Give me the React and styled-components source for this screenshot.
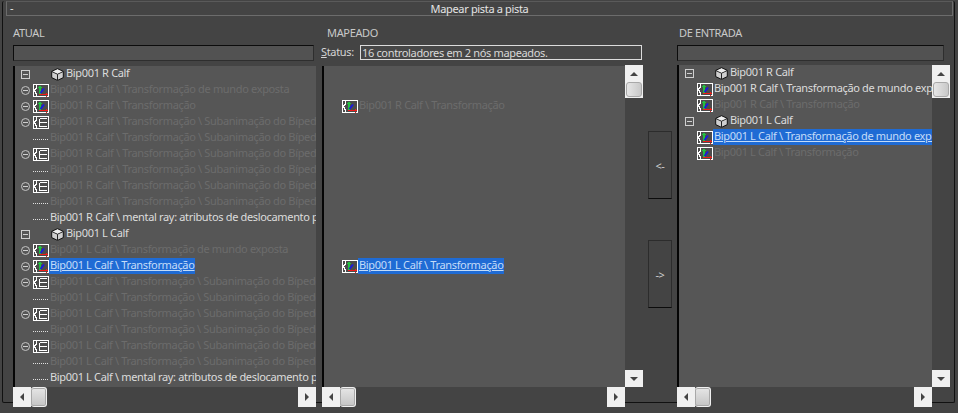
import React from 'react';
import styled, { createGlobalStyle } from 'styled-components';

const GlobalStyle = createGlobalStyle`
  html, body {
    margin: 0;
    background: #444444;
  }
`;

const r = 'Bip001 R Calf';
const l = 'Bip001 L Calf';
const SUB = ' \\ Transformação \\ Subanimação do Bípede';

const sideRows = (name, mental) => [
  { kind: 'node', text: name, bright: true },
  { kind: 'track', toggle: true, text: `${name} \\ Transformação de mundo exposta` },
  { kind: 'track', toggle: true, text: `${name} \\ Transformação`, selected: name === l },
  { kind: 'list', toggle: true, text: name + SUB + ': Rotação' },
  { kind: 'leaf', text: name + SUB + ': Posição' },
  { kind: 'list', toggle: true, text: name + SUB + ': Rotação' },
  { kind: 'leaf', text: name + SUB + ': Posição' },
  { kind: 'list', toggle: true, text: name + SUB + ': Rotação' },
  { kind: 'leaf', text: name + SUB + ': Posição' },
  { kind: 'leaf', text: mental, bright: true },
];

const currentRows = [
  ...sideRows(r, `${r} \\ mental ray: atributos de deslocamento padrão`),
  ...sideRows(l, `${l} \\ mental ray: atributos de deslocamento padrão`),
];

const mappedRows = Array.from({ length: 20 }, (_, i) => {
  if (i === 2) return { kind: 'track', text: `${r} \\ Transformação` };
  if (i === 12) return { kind: 'track', text: `${l} \\ Transformação`, selected: true };
  return { kind: 'empty' };
});

const incomingRows = [
  { kind: 'node', text: r, bright: true },
  { kind: 'track', text: `${r} \\ Transformação de mundo exposta`, bright: true },
  { kind: 'track', text: `${r} \\ Transformação` },
  { kind: 'node', text: l, bright: true },
  { kind: 'track', text: `${l} \\ Transformação de mundo exposta`, selected: true },
  { kind: 'track', text: `${l} \\ Transformação` },
];

const Brace = () => <path d="M3.5 1v3h-1v1.5h-1v2h1v1.5h1v3" fill="none" stroke="#fff" />;

const TrackIcon = () => (
  <svg width="16" height="13" viewBox="0 0 16 13" shapeRendering="crispEdges">
    <rect x="0.5" y="0.5" width="15" height="12" fill="#4c4c4c" stroke="#fff" />
    <Brace />
    <path d="M6.5 2v8" stroke="#22c040" strokeWidth="2" />
    <path d="M5 3.5h4" stroke="#22c040" />
    <path d="M7.5 9L11 4.5" stroke="#1a1ae0" strokeWidth="2" shapeRendering="auto" />
    <path d="M6 10.5h9" stroke="#f01c18" strokeWidth="1.5" />
    <path d="M13 9h1M13 12h1" stroke="#f01c18" />
  </svg>
);

const ListIcon = () => (
  <svg width="16" height="13" viewBox="0 0 16 13" shapeRendering="crispEdges">
    <rect x="0.5" y="0.5" width="15" height="12" fill="#4c4c4c" stroke="#fff" />
    <Brace />
    <path d="M6.5 2.5v8M6.5 2.5h7M6.5 6.5h7M6.5 10.5h7" stroke="#fff" fill="none" />
  </svg>
);

const CubeIcon = () => (
  <svg width="13" height="13" viewBox="0 0 13 13">
    <path d="M6.5 0.7L12.3 3.4V9.6L6.5 12.4L0.7 9.6V3.4Z" fill="#cfcfcf" stroke="#111" />
    <path d="M0.9 3.6L6.5 6.2L12.1 3.6M6.5 6.2V12" fill="none" stroke="#222" />
    <path d="M6.5 1.6L11 3.5L6.5 5.4L2 3.5Z" fill="#eeeeee" />
  </svg>
);

const Row = ({ row }) => {
  if (row.kind === 'empty') return <RowLine />;
  if (row.kind === 'node') {
    return (
      <RowLine>
        <SquareToggle />
        <CubeSlot>
          <CubeIcon />
        </CubeSlot>
        <Label $bright>{row.text}</Label>
      </RowLine>
    );
  }
  return (
    <RowLine>
      {row.toggle ? <RoundToggle /> : <ToggleGap />}
      <IconSlot>
        {row.kind === 'track' && <TrackIcon />}
        {row.kind === 'list' && <ListIcon />}
        {row.kind === 'leaf' && <Dots />}
      </IconSlot>
      <Label $bright={row.bright} $selected={row.selected}>
        {row.text}
      </Label>
    </RowLine>
  );
};

const HorizontalBar = () => (
  <HBar>
    <HButton>
      <ArrowLeft />
    </HButton>
    <HThumb />
    <HSpacer />
    <HButton>
      <ArrowRight />
    </HButton>
  </HBar>
);

const VerticalBar = () => (
  <VBar>
    <VButton>
      <ArrowUp />
    </VButton>
    <VThumbWrap>
      <VThumb />
    </VThumbWrap>
    <VSpacer />
    <VButton>
      <ArrowDown />
    </VButton>
  </VBar>
);

const TreeList = ({ rows, $flush, scroll }) => (
  <ListArea $scroll={scroll}>
    <Tree $flush={$flush}>
      {rows.map((row, i) => (
        <Row key={i} row={row} />
      ))}
    </Tree>
    {scroll && <VerticalBar />}
    <HorizontalBar />
  </ListArea>
);

const App = () => (
  <Page>
    <GlobalStyle />
    <Rollout>
      <Header>
        <Collapse>-</Collapse>
        <Title>Mapear pista a pista</Title>
      </Header>
      <Columns>
        <Column>
          <ColumnLabel>ATUAL</ColumnLabel>
          <SearchBox $width={301} />
          <TreeList rows={currentRows} />
        </Column>
        <Column>
          <ColumnLabel $inset={6}>MAPEADO</ColumnLabel>
          <StatusRow>
            <StatusCaption>
              <u>S</u>tatus:
            </StatusCaption>
            <StatusField>16 controladores em 2 nós mapeados.</StatusField>
          </StatusRow>
          <MappedWrap>
            <TreeList rows={mappedRows} scroll />
          </MappedWrap>
        </Column>
        <ButtonColumn>
          <MoveButton>&lt;-</MoveButton>
          <MoveButton>-&gt;</MoveButton>
        </ButtonColumn>
        <Column>
          <ColumnLabel $inset={2}>DE ENTRADA</ColumnLabel>
          <SearchBox $width={267} />
          <TreeList rows={incomingRows} scroll $flush />
        </Column>
      </Columns>
    </Rollout>
  </Page>
);

export default App;

const Page = styled.div`
  width: 958px;
  height: 413px;
  box-sizing: border-box;
  padding: 8px 3px 3px 2px;
  background: #444444;
  overflow: hidden;
  font-family: 'Noto Sans', 'Liberation Sans', sans-serif;
  font-size: 11px;
  letter-spacing: -0.34px;
  color: #d8d8d8;
`;

const Rollout = styled.div`
  height: 402px;
  box-sizing: border-box;
  border: 1px solid #111;
  border-top: none;
  border-radius: 2px;
`;

const Header = styled.div`
  position: relative;
  height: 15px;
  margin: -7px 1px 0 3px;
  box-sizing: border-box;
  border: 1px solid #6c6c6c;
  border-top-color: #5a5a5a;
  background: #444444;
  display: flex;
  align-items: center;
  justify-content: center;
`;

const Collapse = styled.span`
  position: absolute;
  left: 3px;
  top: -1px;
  line-height: 14px;
  color: #e8e8e8;
`;

const Title = styled.span`
  line-height: 13px;
  color: #e4e4e4;
`;

const Columns = styled.div`
  display: grid;
  grid-template-columns: 303px 322px 24px 273px;
  column-gap: 5px;
  padding: 10px 0 0 10px;
`;

const Column = styled.div`
  display: flex;
  flex-direction: column;
  min-width: 0;
`;

const ColumnLabel = styled.div`
  height: 14px;
  line-height: 14px;
  margin: 0 0 5px ${(p) => p.$inset || 0}px;
  color: #c9c9c9;
`;

const SearchBox = styled.div`
  width: ${(p) => p.$width}px;
  height: 16px;
  box-sizing: border-box;
  margin-bottom: 4px;
  background: #525252;
  border: 1px solid #2e2e2e;
  border-top: 1px solid #0c0c0c;
  border-left: 1px solid #0c0c0c;
`;

const StatusRow = styled.div`
  display: flex;
  height: 16px;
  margin-bottom: 4px;
`;

const StatusCaption = styled.div`
  width: 39px;
  line-height: 14px;
  color: #d4d4d4;
`;

const StatusField = styled.div`
  width: 282px;
  height: 15px;
  box-sizing: border-box;
  border: 1px solid #dcdcdc;
  padding-left: 1px;
  line-height: 13px;
  white-space: nowrap;
  color: #d8d8d8;
  background: #474747;
`;

const MappedWrap = styled.div`
  padding-left: 1px;
`;

const ListArea = styled.div`
  display: grid;
  grid-template-columns: ${(p) => (p.$scroll ? '1fr 18px' : '1fr')};
`;

const Tree = styled.div`
  height: ${(p) => (p.$flush ? 322 : 321)}px;
  margin-top: ${(p) => (p.$flush ? 0 : 1)}px;
  box-sizing: border-box;
  border-left: 2px solid #050505;
  background: #565656;
  overflow: hidden;
  min-width: 0;
`;

const RowLine = styled.div`
  display: flex;
  align-items: center;
  height: 16px;
  margin-left: -2px;
  padding-left: 8px;
  white-space: nowrap;
`;

const SquareToggle = styled.span`
  flex: none;
  width: 9px;
  height: 9px;
  box-sizing: border-box;
  margin-right: 3px;
  border: 1px solid #cfcfcf;
  background: linear-gradient(#cfcfcf, #cfcfcf) center / 5px 1px no-repeat;
`;

const RoundToggle = styled(SquareToggle)`
  border-radius: 50%;
  border-color: #c4c4c4;
`;

const ToggleGap = styled.span`
  flex: none;
  width: 12px;
`;

const IconSlot = styled.span`
  flex: none;
  display: flex;
  align-items: center;
  width: 16px;
  height: 13px;
`;

const CubeSlot = styled.span`
  flex: none;
  display: flex;
  width: 14px;
  margin-left: 18px;
`;

const Dots = styled.span`
  width: 15px;
  height: 3px;
  border-bottom: 1px dotted #e0e0e0;
`;

const Label = styled.span`
  flex: none;
  height: 16px;
  line-height: 14px;
  padding: 0 1px;
  color: ${(p) => (p.$selected ? '#c4dcf8' : p.$bright ? '#dcdcdc' : '#6c6c6c')};
  background: ${(p) => (p.$selected ? '#1f6bd4' : 'transparent')};
  text-decoration: ${(p) => (p.$selected ? 'underline' : 'none')};
`;

const HBar = styled.div`
  grid-column: 1;
  display: flex;
  height: 20px;
  background: #444444;
`;

const HButton = styled.div`
  flex: none;
  display: flex;
  align-items: center;
  justify-content: center;
  width: 18px;
  height: 20px;
  background: #f0f0f0;
`;

const HThumb = styled.div`
  flex: none;
  width: 16px;
  height: 20px;
  box-sizing: border-box;
  border: 1px solid #f0f0f0;
  border-left-width: 0;
  border-radius: 3px;
  background: linear-gradient(#e6e6e6, #c4c4c4);
  box-shadow: inset 0 0 0 1px #a8a8a8;
`;

const HSpacer = styled.div`
  flex: 1;
`;

const VBar = styled.div`
  grid-column: 2;
  grid-row: 1;
  display: flex;
  flex-direction: column;
  background: #444444;
`;

const VButton = styled.div`
  flex: none;
  display: flex;
  align-items: center;
  justify-content: center;
  width: 18px;
  height: 17px;
  background: #f0f0f0;
`;

const VThumbWrap = styled.div`
  flex: none;
  height: 16px;
  background: #f0f0f0;
`;

const VThumb = styled.div`
  width: 16px;
  height: 15px;
  margin-left: 1px;
  box-sizing: border-box;
  border: 1px solid #a8a8a8;
  border-radius: 3px;
  background: linear-gradient(90deg, #e6e6e6, #c8c8c8);
`;

const VSpacer = styled.div`
  flex: 1;
`;

const ArrowUp = styled.span`
  border: 4px solid transparent;
  border-top: none;
  border-bottom: 4px solid #444;
`;

const ArrowDown = styled.span`
  border: 4px solid transparent;
  border-bottom: none;
  border-top: 4px solid #444;
`;

const ArrowLeft = styled.span`
  border: 4px solid transparent;
  border-left: none;
  border-right: 4px solid #444;
`;

const ArrowRight = styled.span`
  border: 4px solid transparent;
  border-right: none;
  border-left: 4px solid #444;
`;

const ButtonColumn = styled.div`
  display: flex;
  flex-direction: column;
  gap: 41px;
  padding-top: 105px;
`;

const MoveButton = styled.div`
  height: 68px;
  box-sizing: border-box;
  display: flex;
  align-items: center;
  justify-content: center;
  border: 1px solid #2c2c2c;
  border-bottom: 1px solid #0c0c0c;
  color: #cfcfcf;
  background: #444444;
`;
